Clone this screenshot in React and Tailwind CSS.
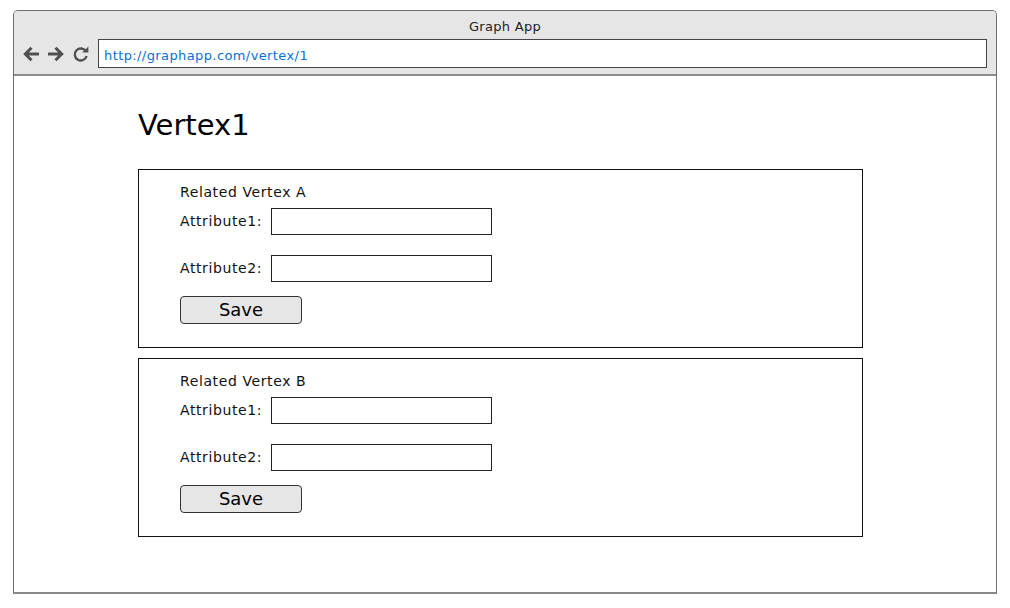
import React from 'react';

const font = { fontFamily: '"DejaVu Sans", "Noto Sans", sans-serif' };

const Field = ({ label }) => (
    <div className="flex items-center">
        <span className="w-[91px] text-[14px] tracking-[0.6px] text-[#111]">{label}</span>
        <div className="w-[221px] h-[27px] border border-[#222] bg-white" />
    </div>
);

const VertexPanel = ({ title }) => (
    <div className="w-[725px] h-[179px] border border-[#111] pl-[41px] pt-[14px] flex flex-col">
        <div className="text-[14px] leading-[16px] tracking-[0.6px] text-[#111]">{title}</div>
        <div className="mt-[8px] flex flex-col gap-[20px]">
            <Field label="Attribute1:" />
            <Field label="Attribute2:" />
        </div>
        <button className="mt-[14px] w-[122px] h-[28px] rounded-[4px] border border-[#333] bg-[#e6e6e6] text-[18px] leading-none text-black">
            Save
        </button>
    </div>
);

const App = () => {
    return (
        <div className="w-[1010px] h-[608px] bg-white pt-[10px] pl-[13px]" style={font}>
            <div className="w-[984px] h-[584px] border border-[#707070] border-b-2 border-b-[#8a8a8a] rounded-t-[5px] flex flex-col overflow-hidden">
                {/* Header */}
                <div className="h-[65px] bg-[#e6e6e6] border-b-2 border-[#8c8c8c] flex flex-col">
                    <div className="h-[28px] pt-[3px] flex items-center justify-center text-[13px] tracking-[0.3px] text-[#222]">Graph App</div>
                    <div className="flex items-center pl-[8px]">
                        <svg width="18" height="18" viewBox="0 0 18 18" className="mr-[7px]">
                            <path d="M17 9H3.5 M9.5 2.8 L3.3 9 L9.5 15.2" fill="none" stroke="#505050" strokeWidth="3" />
                        </svg>
                        <svg width="18" height="18" viewBox="0 0 18 18" className="mr-[7px]">
                            <path d="M1 9H14.5 M8.5 2.8 L14.7 9 L8.5 15.2" fill="none" stroke="#505050" strokeWidth="3" />
                        </svg>
                        <svg width="18" height="18" viewBox="0 0 18 18" className="mr-[8px]">
                            <path d="M14 6.5 A6 6 0 1 0 14.6 11" fill="none" stroke="#505050" strokeWidth="2.4" />
                            <path d="M10.2 7.6 L16.4 7.6 L16.4 1.6 Z" fill="#505050" />
                        </svg>
                        <div className="w-[889px] h-[29px] border border-[#444] bg-white flex items-center pl-[5px] pt-[4px] text-[13px] tracking-[0.4px] text-[#0a6fd6]">
                            http://graphapp.com/vertex/1
                        </div>
                    </div>
                </div>

                {/* Content */}
                <div className="flex-1 bg-white pl-[124px] pt-[35px]">
                    <h1 className="text-[29px] leading-[29px] text-black">Vertex1</h1>
                    <div className="mt-[29px] flex flex-col gap-[10px]">
                        <VertexPanel title="Related Vertex A" />
                        <VertexPanel title="Related Vertex B" />
                    </div>
                </div>
            </div>
        </div>
    );
};

export default App;
